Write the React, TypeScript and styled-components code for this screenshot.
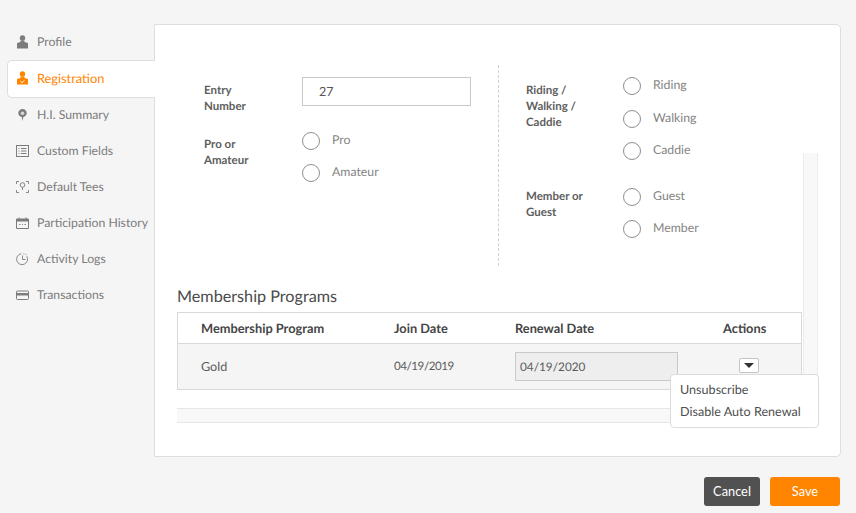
import React from 'react';
import styled, { createGlobalStyle } from 'styled-components';

const Global = createGlobalStyle`
  html, body { margin: 0; padding: 0; background: #f5f5f5; }
  body {
    font-family: Lato, "Liberation Sans", sans-serif;
    color: #555;
    text-rendering: geometricPrecision;
  }
  * { box-sizing: border-box; }
`;

const Page = styled.div`
  width: 856px;
  height: 513px;
  padding: 24px 15px 0 7px;
  display: flex;
  flex-direction: column;
  overflow: hidden;
`;
const Body = styled.div`
  display: flex;
  height: 433px;
`;
const Sidebar = styled.nav`
  width: 147px;
  flex: none;
  display: flex;
  flex-direction: column;
  position: relative;
  z-index: 1;
`;
const NavItem = styled.div<{ $active?: boolean }>`
  height: ${p => (p.$active ? '38px' : '36px')};
  margin-bottom: ${p => (p.$active ? '-1px' : '0')};
  width: ${p => (p.$active ? '148px' : '147px')};
  display: flex;
  align-items: center;
  gap: 8px;
  padding-left: 8px;
  padding-bottom: ${p => (p.$active ? '2px' : '1px')};
  font-size: ${p => (p.$active ? '12.8px' : '12.25px')};
  white-space: nowrap;
  color: ${p => (p.$active ? '#ff8500' : '#7c7c7c')};
  background: ${p => (p.$active ? '#fff' : 'transparent')};
  border: ${p => (p.$active ? '1px solid #dedede' : '1px solid transparent')};
  border-right: none;
  border-radius: 5px 0 0 5px;
  svg { width: 13px; height: 14px; flex: none; }
`;
const Card = styled.main`
  flex: 1;
  background: #fff;
  border: 1px solid #dedede;
  border-radius: 0 5px 5px 0;
  position: relative;
  padding: 40px 0 0 22px;
`;
const FormRow = styled.section`
  display: flex;
  height: 201px;
`;
const Column = styled.div<{ $divided?: boolean }>`
  width: ${p => (p.$divided ? 'auto' : '321px')};
  padding: 12px 0 0 27px;
  display: flex;
  flex-direction: column;
  gap: ${p => (p.$divided ? '28px' : '17px')};
  border-left: ${p => (p.$divided ? '1px dashed #cfcfcf' : 'none')};
`;
const Field = styled.div<{ $labelWidth: number }>`
  display: grid;
  grid-template-columns: ${p => p.$labelWidth}px auto;
  align-items: start;
`;
const Label = styled.div<{ $offset: number }>`
  font-size: 11.5px;
  line-height: 16px;
  font-weight: 700;
  color: #5e5e5e;
  margin-top: ${p => p.$offset}px;
`;
const TextInput = styled.div`
  width: 169px;
  height: 29px;
  border: 1px solid #c9c9c9;
  padding-left: 16px;
  font-size: 12.5px;
  line-height: 27px;
  color: #555;
`;
const RadioGroup = styled.div<{ $gap: number }>`
  display: flex;
  flex-direction: column;
  gap: ${p => p.$gap}px;
`;
const RadioRow = styled.label`
  display: flex;
  gap: 12px;
  height: 18px;
  font-size: 12.3px;
  line-height: 16px;
  color: #848484;
`;
const Radio = styled.span`
  width: 18px;
  height: 18px;
  border: 1px solid #8f8f8f;
  border-radius: 50%;
  flex: none;
`;
const SectionTitle = styled.h2`
  margin: 23px 0 0;
  height: 23px;
  font-size: 16.2px;
  line-height: 16px;
  font-weight: 400;
  color: #4a4a4a;
`;
const Table = styled.div`
  width: 625px;
  border: 1px solid #d9d9d9;
`;
const TableRow = styled.div<{ $head?: boolean }>`
  display: grid;
  grid-template-columns: 193px 121px 208px 1fr;
  align-items: center;
  padding-left: 23px;
  height: ${p => (p.$head ? '31px' : '45px')};
  font-size: ${p => (p.$head ? '12.8px' : '12.6px')};
  font-weight: ${p => (p.$head ? 700 : 400)};
  color: ${p => (p.$head ? '#454545' : '#5c5c5c')};
  background: ${p => (p.$head ? '#fff' : '#f5f5f5')};
  border-bottom: ${p => (p.$head ? '1px solid #d9d9d9' : 'none')};
`;
const BodyCell = styled.div`
  padding-bottom: 1px;
`;
const JoinDate = styled(BodyCell)`
  font-size: 11.6px;
  letter-spacing: -0.45px;
`;
const DateBox = styled.div`
  width: 163px;
  height: 29px;
  background: #eeeeee;
  border: 1px solid #c9c9c9;
  padding-left: 4px;
  font-size: 11.8px;
  line-height: 27px;
  color: #5c5c5c;
`;
const ActionsCell = styled.div`
  position: relative;
  height: 100%;
`;
const Toggle = styled.div`
  position: absolute;
  left: 16px;
  top: 14px;
  width: 20px;
  height: 15px;
  background: #fff;
  border: 1px solid #c4c4c4;
  border-radius: 2px;
  display: flex;
  align-items: center;
  justify-content: center;
  &::after {
    content: '';
    border-left: 5px solid transparent;
    border-right: 5px solid transparent;
    border-top: 5px solid #333;
  }
`;
const Menu = styled.div`
  position: absolute;
  left: -53px;
  top: 30px;
  width: 149px;
  height: 54px;
  background: #fff;
  border: 1px solid #dcdcdc;
  border-radius: 4px;
  padding: 4px 0 0 9px;
  z-index: 3;
  font-weight: 400;
`;
const MenuItem = styled.div`
  height: 22px;
  line-height: 21px;
  font-size: 12.6px;
  color: #4f4f4f;
  white-space: nowrap;
`;
const HTrack = styled.div`
  width: 641px;
  height: 15px;
  margin-top: 18px;
  background: #f8f8f8;
  border-top: 1px solid #e6e6e6;
  border-bottom: 1px solid #e6e6e6;
`;
const VTrack = styled.div`
  position: absolute;
  left: 648px;
  top: 128px;
  width: 15px;
  height: 224px;
  background: #f8f8f8;
  border-left: 1px solid #ececec;
  border-right: 1px solid #ececec;
`;
const Footer = styled.footer`
  display: flex;
  justify-content: flex-end;
  gap: 10px;
  margin-top: 20px;
  padding-right: 1px;
`;
const Button = styled.button<{ $primary?: boolean }>`
  height: 29px;
  width: ${p => (p.$primary ? '70px' : '56px')};
  border: none;
  border-radius: 3px;
  background: ${p => (p.$primary ? '#ff8500' : '#515151')};
  color: #fff;
  font: 400 12.8px Lato, "Liberation Sans", sans-serif;
  padding: 0 0 2px;
`;

const Icons: Record<string, React.ReactNode> = {
  profile: (
    <svg viewBox="0 0 13 14" fill="currentColor"><circle cx="6.5" cy="3" r="2.700" /><path d="M4.500 5.500h4V7l3.500 1v5.500H1V8l3.500-1z" /></svg>
  ),
  registration: (
    <svg viewBox="0 0 13 14" fill="currentColor"><circle cx="6.5" cy="3" r="2.700" /><path d="M4.500 5.500h4V7l3.500 1v5.500H1V8l3.500-1z" /><path d="M4.500 10.300l1.500 1.300 2.600-2.300" fill="none" stroke="#fff" strokeWidth="1" /></svg>
  ),
  summary: (
    <svg viewBox="0 0 13 14" fill="currentColor"><path d="M6.500 1a4.200 4.200 0 0 1 4.200 4.200c0 2-1.700 3.200-3.400 3.900L6.500 13l-.8-3.900C4 8.400 2.300 7.200 2.300 5.200A4.200 4.200 0 0 1 6.500 1z" /><circle cx="6.500" cy="5.200" r="1.800" fill="#d8d8d8" /></svg>
  ),
  fields: (
    <svg viewBox="0 0 13 14" fill="none" stroke="currentColor" strokeWidth="1"><rect x=".5" y="1.500" width="12" height="11" /><path d="M2.500 4.500h1M5 4.500h5.500M2.500 7h1M5 7h5.500M2.500 9.500h1M5 9.500h5.500" /></svg>
  ),
  tees: (
    <svg viewBox="0 0 13 14" fill="none" stroke="currentColor" strokeWidth=".9"><path d="M.5 4V1.500h2.500M10 1.500h2.500V4M.5 10v2.500H3M10 12.500h2.500V10" /><circle cx="6.500" cy="5" r="2.300" /><path d="M6.500 7.300v2.700" /></svg>
  ),
  history: (
    <svg viewBox="0 0 13 14" fill="none" stroke="currentColor"><path d="M.5 3h12v9.500H.500z" /><path d="M.5 3.500h12v1.500H.5z" fill="currentColor" /><path d="M3 1.500v2M10 1.500v2" /><path d="M3 8.500h1.500M6 8.500h1M8.500 8.500H10" strokeWidth=".9" /></svg>
  ),
  logs: (
    <svg viewBox="0 0 13 14" fill="none" stroke="currentColor" strokeWidth=".9"><path d="M10.800 4.300a5.500 5.500 0 1 1-5.600-2.600" /><path d="M6.500 3.500v4h3" /><path d="M7.500 1.700h.9M9.700 2.500h.8" /></svg>
  ),
  transactions: (
    <svg viewBox="0 0 13 14" fill="none" stroke="currentColor"><rect x=".5" y="3" width="12" height="8.500" rx="1" /><path d="M.5 5.500h12v1.500H.5z" fill="currentColor" /></svg>
  ),
};

const nav: [string, string][] = [
  ['profile', 'Profile'],
  ['registration', 'Registration'],
  ['summary', 'H.I. Summary'],
  ['fields', 'Custom Fields'],
  ['tees', 'Default Tees'],
  ['history', 'Participation History'],
  ['logs', 'Activity Logs'],
  ['transactions', 'Transactions'],
];

const Options = ({ items, gap = 14 }: { items: string[]; gap?: number }) => (
  <RadioGroup $gap={gap}>
    {items.map(i => (
      <RadioRow key={i}><Radio />{i}</RadioRow>
    ))}
  </RadioGroup>
);

export default function App() {
  return (
    <Page>
      <Global />
      <Body>
        <Sidebar>
          {nav.map(([k, t]) => (
            <NavItem key={k} $active={k === 'registration'}>{Icons[k]}{t}</NavItem>
          ))}
        </Sidebar>
        <Card>
          <FormRow>
            <Column>
              <Field $labelWidth={98}>
                <Label $offset={6}>Entry<br />Number</Label>
                <TextInput>27</TextInput>
              </Field>
              <Field $labelWidth={98}>
                <Label $offset={5}>Pro or<br />Amateur</Label>
                <Options items={['Pro', 'Amateur']} />
              </Field>
            </Column>
            <Column $divided>
              <Field $labelWidth={97}>
                <Label $offset={6}>Riding /<br />Walking /<br />Caddie</Label>
                <Options items={['Riding', 'Walking', 'Caddie']} gap={14.5} />
              </Field>
              <Field $labelWidth={97}>
                <Label $offset={1}>Member or<br />Guest</Label>
                <Options items={['Guest', 'Member']} />
              </Field>
            </Column>
          </FormRow>
          <SectionTitle>Membership Programs</SectionTitle>
          <Table>
            <TableRow $head>
              <div>Membership Program</div>
              <div>Join Date</div>
              <div>Renewal Date</div>
              <div>Actions</div>
            </TableRow>
            <TableRow>
              <BodyCell>Gold</BodyCell>
              <JoinDate>04/19/2019</JoinDate>
              <DateBox>04/19/2020</DateBox>
              <ActionsCell>
                <Toggle />
                <Menu>
                  <MenuItem>Unsubscribe</MenuItem>
                  <MenuItem>Disable Auto Renewal</MenuItem>
                </Menu>
              </ActionsCell>
            </TableRow>
          </Table>
          <HTrack />
          <VTrack />
        </Card>
      </Body>
      <Footer>
        <Button>Cancel</Button>
        <Button $primary>Save</Button>
      </Footer>
    </Page>
  );
}
